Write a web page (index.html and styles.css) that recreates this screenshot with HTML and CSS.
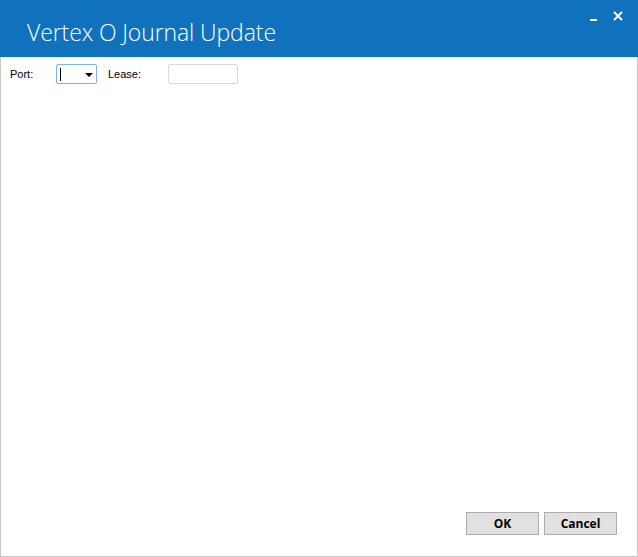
FILE: index.html
```html
<!DOCTYPE html>
<html>
<head>
<meta charset="utf-8">
<link rel="stylesheet" href="styles.css">
</head>
<body>
<div class="window">
  <header class="titlebar">
    <h1 class="title">Vertex O Journal Update</h1>
    <div class="controls">
      <svg class="min" width="8" height="4" viewBox="0 0 8 4"><rect x="0" y="1" width="7" height="2" fill="#fff"/></svg>
      <svg class="close" width="10" height="10" viewBox="0 0 10 10"><path d="M1 1 L9 9 M9 1 L1 9" stroke="#fff" stroke-width="2"/></svg>
    </div>
  </header>
  <main class="content">
    <div class="row">
      <span class="label label-port">Port:</span>
      <div class="combo"><span class="caret"></span><span class="arrow"></span></div>
      <span class="label label-lease">Lease:</span>
      <div class="textbox"></div>
    </div>
    <div class="buttons">
      <button class="btn">OK</button>
      <button class="btn">Cancel</button>
    </div>
  </main>
</div>
</body>
</html>
```

FILE: styles.css
```css
html, body { margin: 0; padding: 0; }
body { background: #fff; width: 638px; height: 557px; overflow: hidden; font-family: "Liberation Sans", Arial, sans-serif; }
.window { width: 638px; height: 557px; box-sizing: border-box; border: 1px solid #c8c8c8; border-top: none; display: flex; flex-direction: column; }
.titlebar { height: 57px; margin: 0 -1px; background: #1072bd; display: flex; justify-content: space-between; align-items: flex-start; flex-shrink: 0; }
.title { margin: 0; padding: 17px 0 0 27px; font-family: "Open Sans", sans-serif; font-weight: 300; font-size: 23px; color: #fff; letter-spacing: -0.1px; line-height: 30px; }
.controls { display: flex; align-items: flex-start; gap: 15px; padding: 11px 15px 0 0; }
.min { margin-top: 7px; }
.content { flex: 1; display: flex; flex-direction: column; justify-content: space-between; padding: 7px 0 21px 0; }
.row { display: flex; align-items: center; height: 20px; }
.label { font-size: 11px; color: #000; }
.label-port { margin-left: 9px; width: 46px; }
.label-lease { margin-left: 11px; width: 60px; }
.combo { width: 41px; height: 20px; box-sizing: border-box; border: 1px solid #7eb4ea; border-radius: 2px; position: relative; }
.caret { position: absolute; left: 3px; top: 3px; width: 1px; height: 13px; background: #000; }
.arrow { position: absolute; left: 28px; top: 8px; width: 0; height: 0; border-left: 4px solid transparent; border-right: 4px solid transparent; border-top: 4px solid #000; }
.textbox { width: 70px; height: 20px; box-sizing: border-box; border: 1px solid #d9d9d9; border-radius: 2px; }
.buttons { display: flex; justify-content: flex-end; gap: 5px; padding-right: 20px; }
.btn { width: 73px; height: 23px; box-sizing: border-box; background: #e1e1e1; border: 1px solid #adadad; font-family: "Open Sans", sans-serif; font-weight: 700; font-size: 12px; color: #000; padding: 0; margin: 0; }
```
